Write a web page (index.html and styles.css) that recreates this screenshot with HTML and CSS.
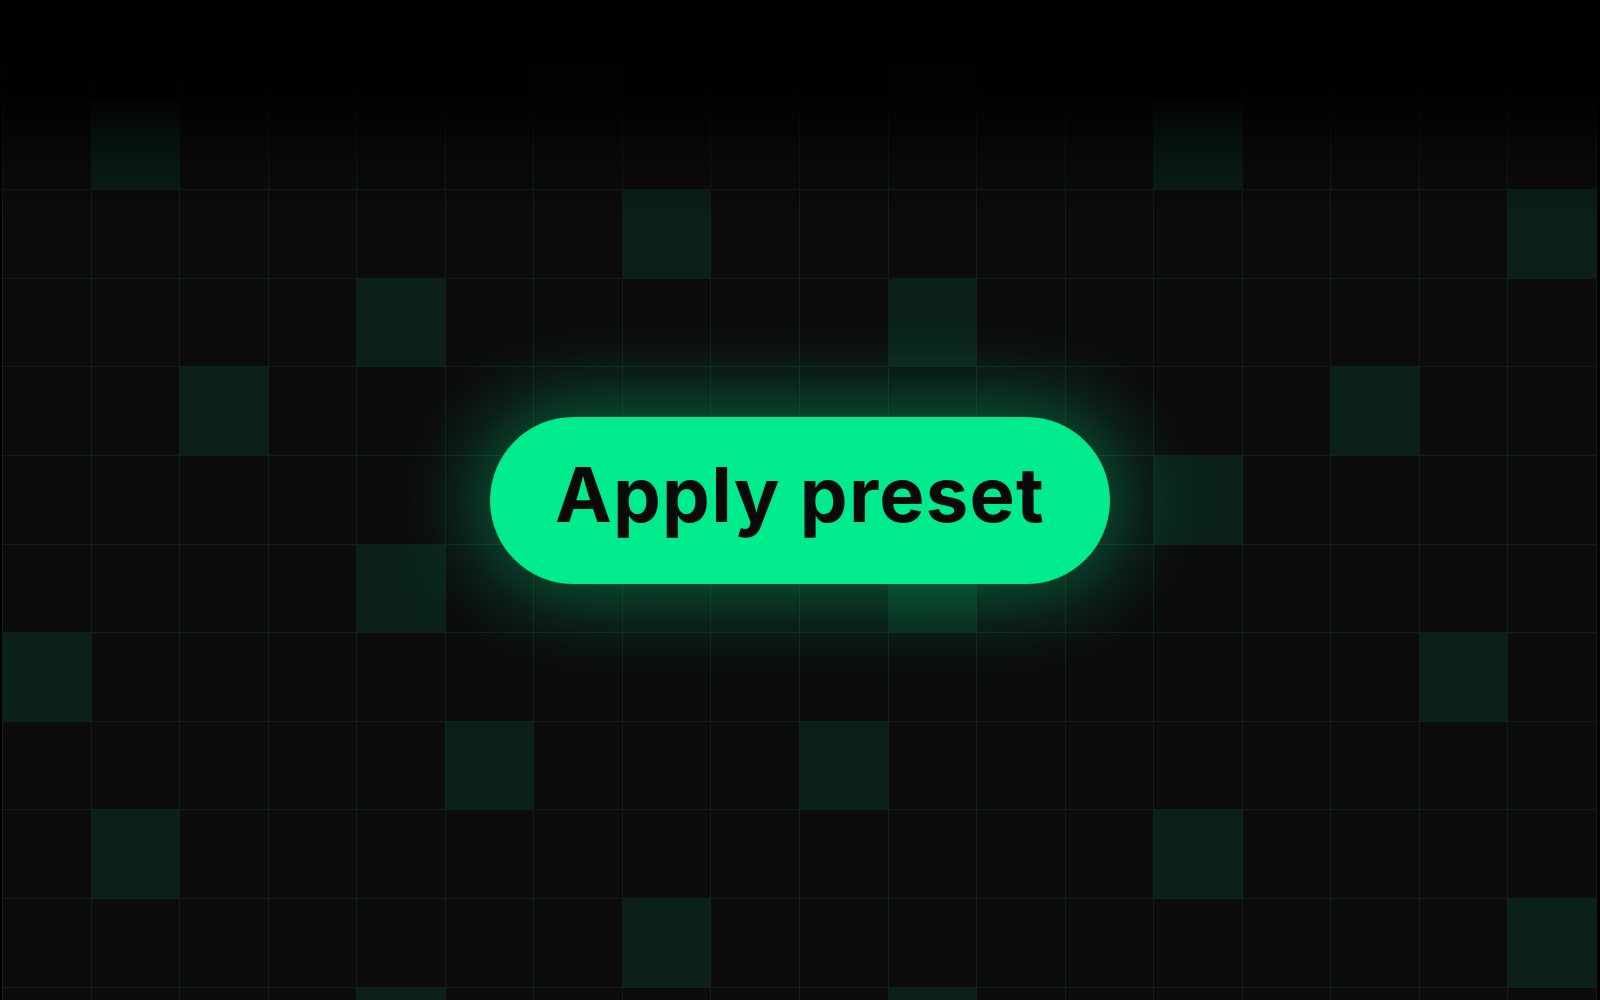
FILE: index.html
```html
<!DOCTYPE html>
<html lang="en">
<head>
    <meta charset="UTF-8">
    <meta name="viewport" content="width=device-width, initial-scale=1.0">
    <title>Apply preset</title>
    <link rel="stylesheet" href="styles.css">
</head>
<body>
    <div class="stage">
        <div class="tiles" id="tiles">
            <!-- tiles are generated below -->
        </div>
        <div class="fade"></div>
        <button class="preset-btn" type="button">Apply preset</button>
    </div>

    <script>
        // lit tiles per row (column indexes)
        const lit = [
            [6, 10],
            [1, 13],
            [7, 17],
            [4, 10],
            [2, 15],
            [13],
            [4, 10],
            [0, 16],
            [5, 9],
            [1, 13],
            [7, 17],
            [4, 10]
        ];

        const tiles = document.getElementById('tiles');
        lit.forEach(function(row) {
            for (let col = 0; col < 18; col++) {
                const tile = document.createElement('div');
                tile.className = row.includes(col) ? 'tile lit' : 'tile';
                tiles.appendChild(tile);
            }
        });
    </script>
</body>
</html>
```

FILE: styles.css
```css
* {
    box-sizing: border-box;
}
body {
    margin: 0;
    background-color: #000;
    font-family: Inter, "Liberation Sans", sans-serif;
    overflow: hidden;
}
.stage {
    display: grid;
    grid-template-rows: 1000px;
    grid-template-columns: 1600px;
    width: 1600px;
    height: 1000px;
    overflow: hidden;
}
.stage > * {
    grid-area: 1 / 1;
}
.tiles {
    align-self: start;
    display: grid;
    grid-template-columns: repeat(18, 1fr);
    grid-auto-rows: 87.6px;
    gap: 1px;
    width: 1595px;
    margin: 12px 0 0 2px;
    padding: 1px;
    background-color: #0e2219;
}
.tile {
    background-color: #0c0c0c;
}
.tile.lit {
    background-color: #0b2118;
}
.fade {
    align-self: start;
    height: 230px;
    background: linear-gradient(to bottom, #000 0, #000 45px, rgba(0,0,0,0.88) 100px, rgba(0,0,0,0.35) 160px, rgba(0,0,0,0) 225px);
}
.preset-btn {
    place-self: center;
    width: 620px;
    height: 167px;
    border: none;
    border-radius: 84px;
    background-color: #00eb8d;
    color: #0a0a0a;
    font-family: Inter, "Liberation Sans", sans-serif;
    font-size: 76px;
    font-weight: 700;
    letter-spacing: 1.2px;
    line-height: 1;
    padding: 0 0 12px;
    box-shadow: 0 0 84px 12px rgba(0, 235, 141, 0.4);
    cursor: pointer;
}
```
